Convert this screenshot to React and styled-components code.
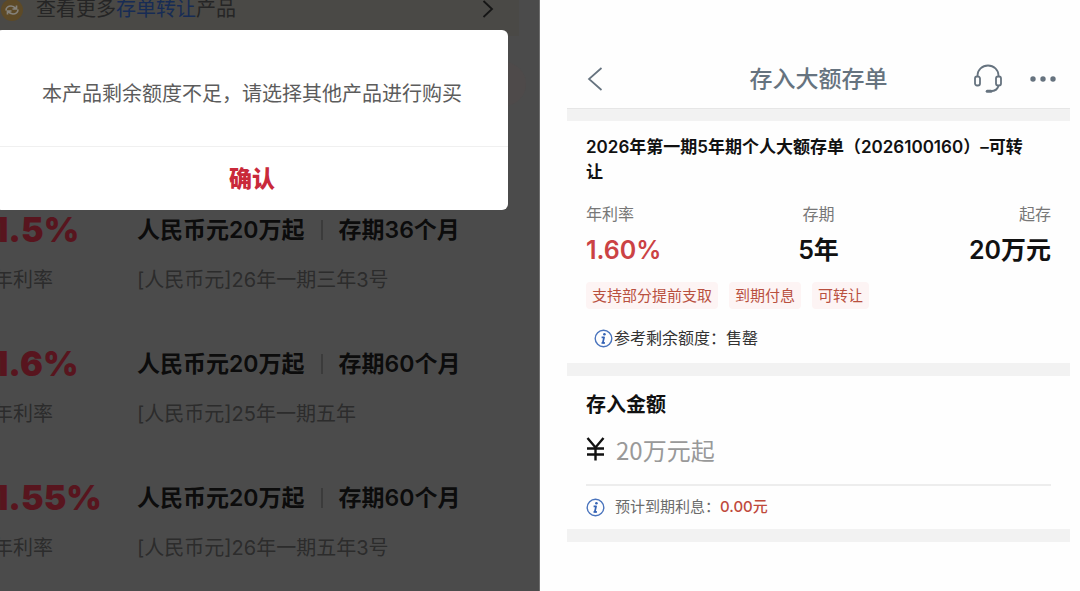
import React from 'react';
import styled, { createGlobalStyle } from 'styled-components';

const GlobalStyle = createGlobalStyle`
  * {
    box-sizing: border-box;
  }
  body {
    margin: 0;
    background-color: #fefefe;
    font-family: Inter, 'Noto Sans CJK SC', sans-serif;
  }
  h1, h2, h3, p, ul, dl, dt, dd {
    margin: 0;
    padding: 0;
  }
  ul {
    list-style: none;
  }
  button {
    border: none;
    padding: 0;
    background: none;
    font-family: inherit;
    cursor: pointer;
  }
`;

const PageStyles = styled.div`
  display: grid;
  grid-template-columns: 1fr 1fr;
  min-height: 100vh;
`;

const ProductPanel = styled.section`
  position: relative;
  overflow: hidden;
  background-color: #4b4b4b;
  border-right: 1px solid #6e6e6e;
  border-bottom: 2px solid #434343;
`;

const PromoLink = styled.a`
  display: flex;
  align-items: center;
  height: 36px;
  margin-right: 20px;
  padding: 0 25px 18px 0;
  background-color: #4a4946;
  color: #252525;
  font-size: 20px;
  line-height: 20px;
  text-decoration: none;
  svg {
    flex: none;
  }
  p {
    flex: 1;
    margin-left: 12px;
  }
  span {
    color: #172c55;
  }
`;

const FilterBar = styled.div`
  display: flex;
  justify-content: flex-end;
  height: 168px;
  padding: 26px 13px 0 0;
  button {
    width: 44px;
    height: 44px;
    border-radius: 22px;
    background-color: #4e4a4a;
  }
`;

const ProductItem = styled.li`
  display: grid;
  grid-template-columns: 144px 1fr;
  row-gap: 14px;
  align-items: center;
  height: 134px;
  margin-left: -7px;
  padding: 8px 0 40px;
  color: #2c2c2c;
  font-size: 20px;
  line-height: 32px;
  white-space: nowrap;
`;

const Rate = styled.p`
  color: #58151e;
  font-size: 34px;
  font-weight: 900;
`;

const ProductTitle = styled.h3`
  display: flex;
  align-items: center;
  gap: 16px;
  color: #0c0c0c;
  font-size: 23px;
  font-weight: 600;
  i {
    width: 2px;
    height: 20px;
    background-color: #3b3b3b;
  }
`;

const Dialog = styled.div`
  position: absolute;
  top: 30px;
  left: -4px;
  right: 31px;
  border-radius: 6px;
  background-color: #fff;
  text-align: center;
  p {
    padding: 48px 20px 36px;
    border-bottom: 1px solid #f0f0f0;
    color: #5c5c5c;
    font-size: 20px;
    line-height: 32px;
  }
  button {
    width: 100%;
    height: 63px;
    padding-bottom: 4px;
    color: #c9293a;
    font-size: 23px;
    font-weight: 800;
  }
`;

const DepositPanel = styled.section`
  padding: 49px 10px 0 27px;
`;

const Header = styled.header`
  display: grid;
  grid-template-columns: 90px 1fr 90px;
  align-items: center;
  height: 59px;
  padding: 0 14px;
  color: #66737f;
  h1 {
    font-size: 23px;
    font-weight: 500;
    line-height: 32px;
    text-align: center;
  }
  button {
    display: flex;
    color: inherit;
  }
`;

const BackButton = styled.button`
  padding-left: 6px;
`;

const HeaderActions = styled.div`
  display: flex;
  align-items: center;
  justify-content: flex-end;
  gap: 28px;
`;

const Band = styled.div`
  height: 13px;
  background-color: #f2f2f2;
  border-top: 1px solid ${(props) => (props.$line ? '#e6e6e6' : '#f2f2f2')};
`;

const Section = styled.div`
  padding: 14px 19px 10px;
`;

const DepositTitle = styled.h2`
  padding-right: 16px;
  color: #111;
  font-size: 17px;
  font-weight: 600;
  line-height: 25px;
`;

const Facts = styled.dl`
  display: grid;
  grid-template-columns: 1fr 1fr 1fr;
  margin-top: 17px;
  text-align: center;
  div:first-child {
    text-align: left;
  }
  div:last-child {
    text-align: right;
  }
  dt {
    color: #777;
    font-size: 16px;
    line-height: 24px;
  }
`;

const FactValue = styled.dd`
  margin-top: 6px;
  color: ${(props) => (props.$red ? '#cb4244' : '#111')};
  font-size: 25px;
  font-weight: 600;
  line-height: 36px;
`;

const Tags = styled.ul`
  display: flex;
  gap: 11px;
  margin-top: 14px;
  li {
    padding: 0 6px;
    border-radius: 4px;
    background-color: #fdf4f4;
    color: #b9503f;
    font-size: 15px;
    line-height: 27px;
  }
`;

const Quota = styled.p`
  display: flex;
  align-items: center;
  gap: 1px;
  margin: 17px 0 3px 8px;
  color: #333;
  font-size: 16px;
  line-height: 24px;
`;

const AmountField = styled.div`
  label {
    display: block;
    color: #111;
    font-size: 20px;
    font-weight: 600;
    line-height: 30px;
  }
  div {
    display: flex;
    align-items: center;
    gap: 11px;
    height: 66px;
    padding-bottom: 6px;
    border-bottom: 2px solid #ededed;
  }
  input {
    flex: 1;
    min-width: 0;
    padding: 0;
    border: none;
    outline: none;
    background: none;
    font-family: 'Noto Sans CJK SC', sans-serif;
    font-size: 24px;
  }
  input::placeholder {
    color: #999;
    opacity: 1;
  }
`;

const Interest = styled.p`
  display: flex;
  align-items: center;
  gap: 10px;
  margin-top: 9px;
  color: #6b6b6b;
  font-size: 15px;
  line-height: 24px;
  strong {
    color: #c04a3c;
    font-weight: 500;
  }
`;

const InfoIcon = () => (
  <svg width="19" height="19" viewBox="0 0 19 19" fill="none">
    <circle cx="9.5" cy="9.5" r="8.3" stroke="#4a74bd" strokeWidth="1.4" />
    <circle cx="10.4" cy="5.2" r="1.3" fill="#3463b5" />
    <path
      d="M7.6 8.3h2.5l-1.3 5.5h2"
      stroke="#3463b5"
      strokeWidth="1.7"
      strokeLinejoin="round"
    />
    <path d="M7.2 14h3.6" stroke="#3463b5" strokeWidth="1" />
  </svg>
);

const TransferIcon = () => (
  <svg width="24" height="24" viewBox="0 0 24 24" fill="none">
    <circle cx="12" cy="13" r="11" fill="#5d4a27" />
    <path
      d="M6 13.5c0-3 2.500-4.500 5-4.500 2 0 3.500 1 4.500 2.500M18 12.500c0 3-2.500 4.500-5 4.500-2 0-3.500-1-4.500-2.500M16.500 8.500v3.500h-4M7.500 17.500v-3.500h4"
      stroke="#85827b"
      strokeWidth="1.7"
    />
  </svg>
);

const HeadsetIcon = () => (
  <svg
    width="28"
    height="30"
    viewBox="0 0 28 30"
    fill="none"
    stroke="currentColor"
    strokeWidth="1.8"
  >
    <path d="M3.5 12.5v-1a10.5 10 0 0 1 21 0v1" />
    <rect x="1" y="12.5" width="5" height="9" rx="2" />
    <rect x="22" y="12.5" width="5" height="9" rx="2" />
    <path d="M24.5 21.5c-.5 3.5-3.5 5.5-8 5.7" />
    <path d="M13.2 27.2h3.8" strokeWidth="3" strokeLinecap="round" />
  </svg>
);

const products = [
  { rate: '1.5%', term: '存期36个月', name: '[人民币元]26年一期三年3号' },
  { rate: '1.6%', term: '存期60个月', name: '[人民币元]25年一期五年' },
  { rate: '1.55%', term: '存期60个月', name: '[人民币元]26年一期五年3号' },
];

const tags = ['支持部分提前支取', '到期付息', '可转让'];

function ProductList() {
  return (
    <ProductPanel>
      <PromoLink href="#transfer">
        <TransferIcon />
        <p>
          查看更多<span>存单转让</span>产品
        </p>
        <svg width="12" height="18" viewBox="0 0 12 18" fill="none">
          <path d="M1.5 1l8.5 8-8.5 8" stroke="#151515" strokeWidth="1.8" />
        </svg>
      </PromoLink>
      <FilterBar>
        <button type="button" aria-label="筛选" />
      </FilterBar>
      <ul>
        {products.map((item) => (
          <ProductItem key={item.rate}>
            <Rate>{item.rate}</Rate>
            <ProductTitle>
              人民币元20万起
              <i />
              {item.term}
            </ProductTitle>
            <p>年利率</p>
            <p>{item.name}</p>
          </ProductItem>
        ))}
      </ul>
      <Dialog role="alertdialog">
        <p>本产品剩余额度不足，请选择其他产品进行购买</p>
        <button type="button">确认</button>
      </Dialog>
    </ProductPanel>
  );
}

function Deposit() {
  return (
    <DepositPanel>
      <Header>
        <BackButton type="button" aria-label="返回">
          <svg width="16" height="26" viewBox="0 0 16 26" fill="none">
            <path
              d="M14.5 2L2 13l12.5 11"
              stroke="currentColor"
              strokeWidth="1.7"
            />
          </svg>
        </BackButton>
        <h1>存入大额存单</h1>
        <HeaderActions>
          <button type="button" aria-label="客服">
            <HeadsetIcon />
          </button>
          <button type="button" aria-label="更多">
            <svg width="26" height="6" viewBox="0 0 26 6" fill="currentColor">
              <circle cx="3" cy="3" r="2.7" />
              <circle cx="13" cy="3" r="2.7" />
              <circle cx="23" cy="3" r="2.7" />
            </svg>
          </button>
        </HeaderActions>
      </Header>
      <Band $line />
      <Section>
        <DepositTitle>
          2026年第一期5年期个人大额存单（2026100160）–可转让
        </DepositTitle>
        <Facts>
          <div>
            <dt>年利率</dt>
            <FactValue $red>1.60%</FactValue>
          </div>
          <div>
            <dt>存期</dt>
            <FactValue>5年</FactValue>
          </div>
          <div>
            <dt>起存</dt>
            <FactValue>20万元</FactValue>
          </div>
        </Facts>
        <Tags>
          {tags.map((tag) => (
            <li key={tag}>{tag}</li>
          ))}
        </Tags>
        <Quota>
          <InfoIcon />
          参考剩余额度：售罄
        </Quota>
      </Section>
      <Band />
      <Section>
        <AmountField>
          <label htmlFor="amount">存入金额</label>
          <div>
            <svg width="19" height="24" viewBox="0 0 19 24" fill="none">
              <path
                d="M1.5 1l8 9.5 8-9.5M9.5 10.5v13M1 11.5h17M1 17.5h17"
                stroke="#111"
                strokeWidth="2.4"
              />
            </svg>
            <input id="amount" type="text" placeholder="20万元起" />
          </div>
        </AmountField>
        <Interest>
          <InfoIcon />
          <span>
            预计到期利息：<strong>0.00元</strong>
          </span>
        </Interest>
      </Section>
      <Band />
    </DepositPanel>
  );
}

export default function App() {
  return (
    <>
      <GlobalStyle />
      <PageStyles>
        <ProductList />
        <Deposit />
      </PageStyles>
    </>
  );
}
